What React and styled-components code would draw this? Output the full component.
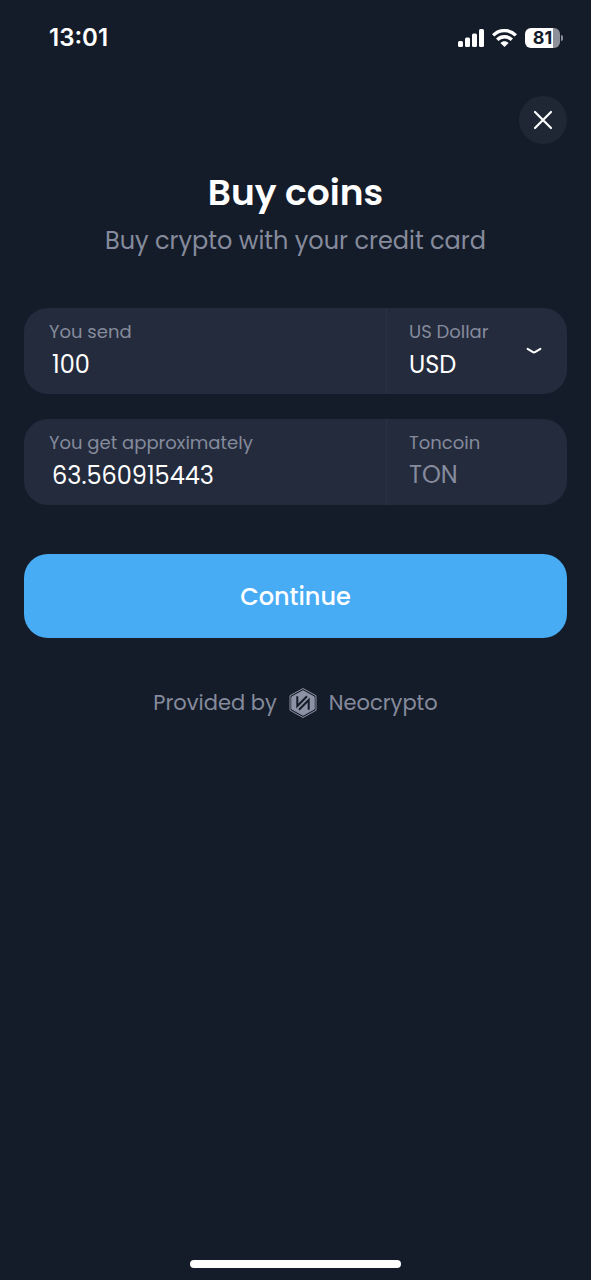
import React, { useState } from "react";
import styled, { createGlobalStyle } from "styled-components";

const colors = {
  page: "#151c29",
  field: "#242b3d",
  divider: "#2a3244",
  muted: "#858b9c",
  logo: "#8d93a5",
  accent: "#48acf5",
};

const GlobalStyle = createGlobalStyle`
  *, *::before, *::after { box-sizing: border-box; }
  body {
    margin: 0;
    background: ${colors.page};
    color: #fff;
    font-family: Poppins, Inter, "Open Sans", sans-serif;
  }
  button, input, select { font-family: inherit; }
`;

const Screen = styled.div`
  min-height: 100vh;
  display: flex;
  flex-direction: column;
`;

const StatusBar = styled.header`
  display: flex;
  align-items: center;
  justify-content: space-between;
  height: 76px;
  padding: 0 28px 0 49px;
`;

const Clock = styled.time`
  font-family: Inter, sans-serif;
  font-size: 24px;
  line-height: 28px;
  font-weight: 600;
`;

const StatusIcons = styled.div`
  display: flex;
  align-items: center;
  gap: 8px;
`;

const Battery = styled.div`
  display: flex;
  align-items: center;
  gap: 1px;
`;

const BatteryBody = styled.div`
  width: 35px;
  height: 20px;
  border-radius: 6px;
  background: linear-gradient(to right, #fff 81%, #8d9098 81%);
  color: ${colors.page};
  font-family: Inter, sans-serif;
  font-size: 18px;
  line-height: 20px;
  font-weight: 700;
  text-align: center;
`;

const BatteryTip = styled.div`
  width: 2px;
  height: 6px;
  border-radius: 0 2px 2px 0;
  background: #8d9098;
`;

const Content = styled.main`
  flex: 1;
  display: flex;
  flex-direction: column;
  padding: 20px 24px 0;
`;

const CloseButton = styled.button`
  align-self: flex-end;
  display: flex;
  align-items: center;
  justify-content: center;
  width: 48px;
  height: 48px;
  padding: 0;
  border: 0;
  border-radius: 50%;
  background: #1e2733;
  color: #fff;
`;

const Heading = styled.div`
  padding: 25px 0 49px;
  text-align: center;
`;

const Title = styled.h1`
  margin: 0;
  font-size: 36px;
  line-height: 48px;
  font-weight: 600;
`;

const Subtitle = styled.p`
  margin: 6px 0 0;
  color: ${colors.muted};
  font-size: 24px;
  line-height: 36px;
`;

const Form = styled.form`
  display: flex;
  flex-direction: column;
  gap: 25px;
`;

const Field = styled.div`
  display: grid;
  grid-template-columns: 2fr 1fr;
  height: 86px;
  border-radius: 24px;
  background: ${colors.field};
`;

const Cell = styled.div`
  display: flex;
  align-items: center;
  min-width: 0;
  padding: 10px 25px;
`;

const CurrencyCell = styled(Cell)`
  padding-left: 22px;
  border-left: 1px solid ${colors.divider};
`;

const Stack = styled.div`
  flex: 1;
  display: flex;
  flex-direction: column;
  min-width: 0;
  height: 100%;
`;

const Label = styled.label`
  color: ${colors.muted};
  font-size: 18px;
  line-height: 28px;
  white-space: nowrap;
`;

const CodeLabel = styled(Label).attrs({ as: "span" })``;

const AmountInput = styled.input`
  width: 100%;
  height: 36px;
  padding: 0 3px;
  border: 0;
  outline: 0;
  background: transparent;
  color: #fff;
  font-size: 24px;
`;

const CurrencySelect = styled.select`
  appearance: none;
  width: 100%;
  height: 36px;
  padding: 0;
  border: 0;
  outline: 0;
  background: transparent;
  color: #fff;
  font-size: 24px;
`;

const CurrencyCode = styled.span`
  color: ${colors.muted};
  font-size: 24px;
  line-height: 36px;
`;

const ContinueButton = styled.button`
  height: 84px;
  margin-top: 24px;
  border: 0;
  border-radius: 24px;
  background: ${colors.accent};
  color: #fff;
  font-size: 24px;
  font-weight: 500;
`;

const Provider = styled.p`
  display: flex;
  align-items: center;
  justify-content: center;
  gap: 12px;
  margin: 48px 0 0;
  color: ${colors.muted};
  font-size: 21px;
  line-height: 34px;
`;

const HomeArea = styled.footer`
  display: flex;
  justify-content: center;
  padding: 12px 0;
`;

const HomeIndicator = styled.div`
  width: 211px;
  height: 8px;
  border-radius: 4px;
  background: #fff;
`;

const SignalIcon = () => (
  <svg width="26" height="18" viewBox="0 0 26 18" fill="#fff" aria-hidden="true">
    <rect x="0" y="12" width="5" height="6" rx="1.5" />
    <rect x="7" y="8.5" width="5" height="9.5" rx="1.5" />
    <rect x="14" y="4.5" width="5" height="13.5" rx="1.5" />
    <rect x="21" y="0" width="5" height="18" rx="1.5" />
  </svg>
);

const WifiIcon = () => (
  <svg width="25" height="18" viewBox="0 0 25 18" aria-hidden="true">
    <g fill="none" stroke="#fff" strokeWidth="3.4">
      <path d="M1.2 6.4 C7.4 0 17.6 0 23.8 6.4" />
      <path d="M5.2 10.8 C9.3 6.8 15.7 6.8 19.8 10.8" />
    </g>
    <path d="M12.5 18 L8.4 14 C10.8 11.8 14.2 11.8 16.6 14 Z" fill="#fff" />
  </svg>
);

const CloseIcon = () => (
  <svg width="20" height="20" viewBox="0 0 20 20" fill="none" stroke="currentColor" strokeWidth="2.2" strokeLinecap="round" aria-hidden="true">
    <path d="M2 2 L18 18 M18 2 L2 18" />
  </svg>
);

const ChevronIcon = () => (
  <svg width="16" height="16" viewBox="0 0 16 16" fill="none" stroke="#fff" strokeWidth="2" strokeLinecap="round" strokeLinejoin="round" pointerEvents="none" aria-hidden="true">
    <path d="M1.6 5.8 L7 9.2 Q8 9.8 9 9.2 L14.4 5.8" />
  </svg>
);

const NeocryptoLogo = () => (
  <svg width="28" height="32" viewBox="0 0 28 32" aria-hidden="true">
    <path d="M14 1.5 L27 8.7 V23.3 L14 30.5 L1 23.3 V8.7 Z" fill="none" stroke={colors.logo} strokeWidth="1" strokeLinejoin="round" />
    <path d="M14 3.7 L25.2 9.9 V22.1 L14 28.3 L2.8 22.1 V9.9 Z" fill={colors.logo} stroke={colors.logo} strokeWidth="1" strokeLinejoin="round" />
    <g fill="none" stroke={colors.page} strokeWidth="2">
      <path d="M8.3 9.3 V19 L18 9.3" />
      <path d="M10 22.7 L19.7 13 V22.7" />
    </g>
  </svg>
);

export default function App() {
  const [send, setSend] = useState("100");
  const [receive, setReceive] = useState("63.560915443");

  return (
    <>
      <GlobalStyle />
      <Screen>
        <StatusBar>
          <Clock>13:01</Clock>
          <StatusIcons>
            <SignalIcon />
            <WifiIcon />
            <Battery>
              <BatteryBody>81</BatteryBody>
              <BatteryTip />
            </Battery>
          </StatusIcons>
        </StatusBar>
        <Content>
          <CloseButton type="button" aria-label="Close">
            <CloseIcon />
          </CloseButton>
          <Heading>
            <Title>Buy coins</Title>
            <Subtitle>Buy crypto with your credit card</Subtitle>
          </Heading>
          <Form onSubmit={(event) => event.preventDefault()}>
            <Field>
              <Cell>
                <Stack>
                  <Label htmlFor="send">You send</Label>
                  <AmountInput id="send" inputMode="decimal" value={send} onChange={(e) => setSend(e.target.value)} />
                </Stack>
              </Cell>
              <CurrencyCell>
                <Stack>
                  <Label htmlFor="currency">US Dollar</Label>
                  <CurrencySelect id="currency" defaultValue="USD">
                    <option>USD</option>
                  </CurrencySelect>
                </Stack>
                <ChevronIcon />
              </CurrencyCell>
            </Field>
            <Field>
              <Cell>
                <Stack>
                  <Label htmlFor="receive">You get approximately</Label>
                  <AmountInput id="receive" inputMode="decimal" value={receive} onChange={(e) => setReceive(e.target.value)} />
                </Stack>
              </Cell>
              <CurrencyCell>
                <Stack>
                  <CodeLabel>Toncoin</CodeLabel>
                  <CurrencyCode>TON</CurrencyCode>
                </Stack>
              </CurrencyCell>
            </Field>
            <ContinueButton type="submit">Continue</ContinueButton>
          </Form>
          <Provider>
            <span>Provided by</span>
            <NeocryptoLogo />
            <span>Neocrypto</span>
          </Provider>
        </Content>
        <HomeArea>
          <HomeIndicator />
        </HomeArea>
      </Screen>
    </>
  );
}
